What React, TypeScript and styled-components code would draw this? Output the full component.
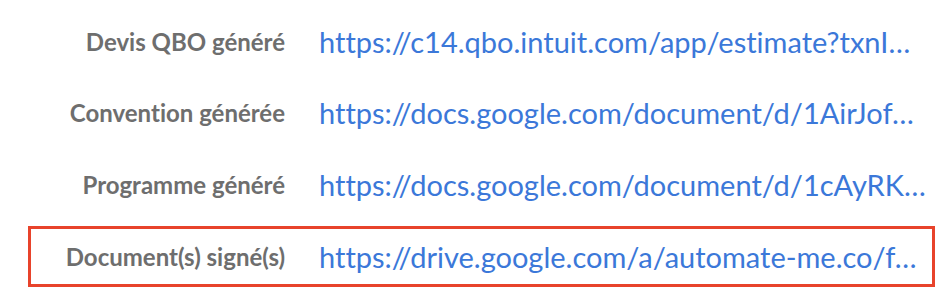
import React from 'react'
import styled, { createGlobalStyle } from 'styled-components'

const GlobalStyle = createGlobalStyle`
	html,
	body {
		margin: 0;
		padding: 0;
		background: #ffffff;
	}

	body {
		font-family: Lato, 'Open Sans', 'Liberation Sans', sans-serif;
		font-variant-ligatures: none;
	}
`

const Page = styled.main`
	box-sizing: border-box;
	width: 950px;
	height: 296px;
	padding: 10.5px 15px 0 28px;
	overflow: hidden;
`

const List = styled.div`
	display: flex;
	flex-direction: column;
	gap: 10.7px;
`

const Row = styled.div<{ highlighted?: boolean }>`
	box-sizing: border-box;
	display: grid;
	grid-template-columns: 254px minmax(0, 1fr);
	column-gap: 34px;
	align-items: center;
	height: 61px;
	padding-right: 8px;
	border: 3px solid ${({ highlighted }) => (highlighted ? '#e8432b' : 'transparent')};
`

const Label = styled.span`
	text-align: right;
	font-size: 24px;
	font-weight: 700;
	color: #6e6e6e;
	white-space: nowrap;
`

const Link = styled.a`
	display: block;
	font-size: 29px;
	color: #3b78d9;
	text-decoration: none;
	white-space: nowrap;
`

// urls are shown as the truncated text the cell displays
const fields = [
	{
		label: 'Devis QBO généré',
		href: 'https://c14.qbo.intuit.com/app/estimate',
		text: 'https://c14.qbo.intuit.com/app/estimate?txnI…',
	},
	{
		label: 'Convention générée',
		href: 'https://docs.google.com/document/d/',
		text: 'https://docs.google.com/document/d/1AirJof…',
	},
	{
		label: 'Programme généré',
		href: 'https://docs.google.com/document/d/',
		text: 'https://docs.google.com/document/d/1cAyRK…',
	},
	{
		label: 'Document(s) signé(s)',
		href: 'https://drive.google.com/a/automate-me.co/',
		text: 'https://drive.google.com/a/automate-me.co/f…',
		highlighted: true,
	},
]

function App() {
	return (
		<>
			<GlobalStyle />
			<Page>
				<List>
					{fields.map(({ label, href, text, highlighted }) => (
						<Row key={label} highlighted={highlighted}>
							<Label>{label}</Label>
							<Link href={href}>{text}</Link>
						</Row>
					))}
				</List>
			</Page>
		</>
	)
}

export default App
